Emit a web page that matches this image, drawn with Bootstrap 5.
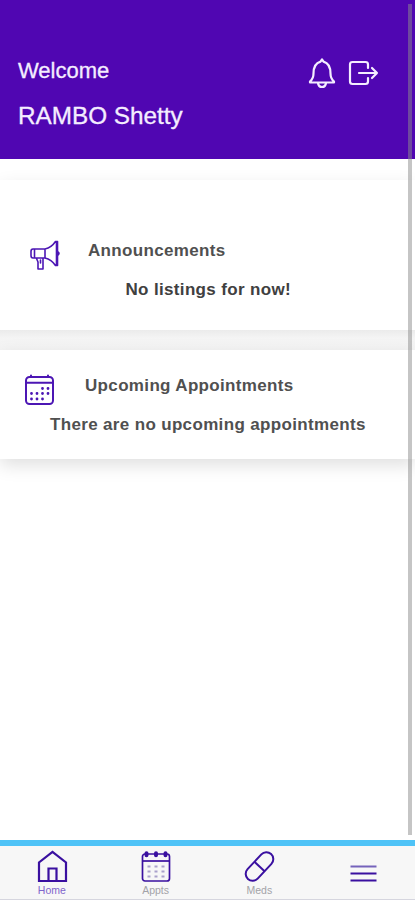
<!DOCTYPE html>
<html lang="en">
<head>
<meta charset="utf-8">
<meta name="viewport" content="width=device-width, initial-scale=1">
<title>Home</title>
<link href="https://cdn.jsdelivr.net/npm/bootstrap@5.3.0/dist/css/bootstrap.min.css" rel="stylesheet">
<style>
  :root { --brand: #5006b2; }
  body { font-family: "Liberation Sans", Arial, sans-serif; }
  svg { fill: none; stroke: currentColor; display: block; overflow: visible; flex-shrink: 0; }
  .app { height: 900px; }
  .hero { height: 159px; background: var(--brand); color: #f4edff; padding: 57px 36px 0 18px; }
  .hello { font-size: 22px; line-height: 26px; margin-top: 1px; -webkit-text-stroke: .3px; }
  .who { font-size: 24.3px; line-height: 30px; margin-top: 17px; -webkit-text-stroke: .3px; }
  .hero-icons { gap: 9px; }
  .panel { background: #fff; color: #505050; font-weight: 700; font-size: 17px; line-height: 22px; letter-spacing: .34px; }
  .news { margin-top: 21px; height: 150px; padding: 60px 0 0 28px; box-shadow: 0 6px 17px rgba(0,0,0,.1); }
  .visits { height: 109px; padding: 25px 0 0 23px; box-shadow: 0 6px 17px rgba(0,0,0,.13); }
  .gutter { background: linear-gradient(#ebebeb, #f4f4f4 40%, #f5f5f5); height: 20px; }
  .panel-head { height: 22px; }
  .message { margin-top: 17px; }
  .news .panel-head { gap: 27px; }
  .visits .panel-head { gap: 30px; }
  .news .message { margin-left: 97.5px; color: #404040; }
  .visits .message { margin-left: 27px; }
  .glyph { color: #4c16b4; }
  .tabs { height: 60px; background: #f7f7f7; border-top: 6px solid #4fc3f7; border-bottom: 1px solid #d6d6df; color: #3a10a0; }
  .tab-item { width: 103.75px; font-size: 10.5px; line-height: 12px; }
  .tab-item span { color: #a3a3a8; margin-top: 1px; }
  .tab-item.active span { color: #7f66cc; }
  .thumb { right: 3px; top: 4px; width: 4px; height: 831px; background: rgba(140,140,140,.5); }
</style>
</head>
<body>
<div class="app d-flex flex-column position-relative overflow-hidden bg-white">
  <header class="hero d-flex justify-content-between flex-shrink-0">
    <div>
      <div class="hello">Welcome</div>
      <div class="who">RAMBO Shetty</div>
    </div>
    <div class="d-flex hero-icons">
      <!-- bell -->
      <svg width="32" height="32" viewBox="0 0 32 32" stroke-width="2.200" stroke-linejoin="round" stroke-linecap="round"><path d="M4 24.500Q7.500 21.500 7.500 16.500C7.500 9.500 9.500 6 14.500 4.600L16 2.500l1.500 2.100C22.500 6 24.500 9.500 24.500 16.500q0 5 3.500 8v1H4zM12 26q.5 4 4 4t4-4"/></svg>
      <!-- log out -->
      <svg width="32" height="32" viewBox="0 0 32 32" stroke-width="2.200" stroke-linejoin="round" stroke-linecap="round"><path d="M21 11V7.500Q21 5 18.500 5h-13Q3 5 3 7.500v17Q3 27 5.500 27h13q2.500 0 2.500-2.500V21M12 16h18M25 11l5 5-5 5"/></svg>
    </div>
  </header>
  <main class="flex-grow-1 overflow-hidden">
    <section class="panel news">
      <div class="panel-head d-flex">
        <!-- megaphone -->
        <svg class="glyph" width="33" height="33" viewBox="0 0 33 33" stroke-width="1.600" stroke-linejoin="round" stroke-linecap="round"><path d="M5 9h12v9H5Q3 18 3 15.500v-4Q3 9 5 9zM6.500 9.500V18M17 9Q23.500 7.500 27.500 1.500h2v24h-2Q23.500 19.500 17 18M28.500 2v23M30 12q2 1.500 0 3M8.300 18l1.700 4v7h5V18M12.500 20v3"/></svg>
        <div>Announcements</div>
      </div>
      <div class="message">No listings for now!</div>
    </section>
    <div class="gutter"></div>
    <section class="panel visits">
      <div class="panel-head d-flex">
        <!-- calendar -->
        <svg class="glyph" width="32" height="32" viewBox="0 0 32 32" stroke-width="2"><rect x="3" y="2" width="27" height="27" rx="3.500"/><path d="M3 7.700h27M8 .5v1.500M25 .5v1.500" stroke-linecap="round"/><path d="M19.500 13.500h.01M25 13.500h.01M8.500 18.500h.01M14 18.500h.01M19.500 18.500h.01M25 18.500h.01M8.500 24h.01M14 24h.01M19.500 24h.01" stroke-width="2.800" stroke-linecap="round"/></svg>
        <div>Upcoming Appointments</div>
      </div>
      <div class="message">There are no upcoming appointments</div>
    </section>
  </main>
  <nav class="tabs d-flex flex-shrink-0">
    <div class="tab-item active d-flex flex-column align-items-center pt-1">
      <svg width="34" height="33" viewBox="0 0 34 33" stroke-width="2.200"><path d="M4 31V12.500L17.500 2 31 12.500V31zM13.500 31V18.500h8V31"/></svg>
      <span>Home</span>
    </div>
    <div class="tab-item d-flex flex-column align-items-center pt-1">
      <svg width="34" height="33" viewBox="0 0 34 33" stroke-width="1.700"><rect x="3.500" y="4" width="27" height="27" rx="2.500"/><path d="M3.500 11h27"/><path d="M7.500 3.300v2M17 3.300v2M26.500 3.300v2" stroke-width="4" stroke-linecap="round"/><path d="M8.500 16.500h3M15.500 16.500h3M22.500 16.500h3M8.500 21.500h3M15.500 21.500h3M22.500 21.500h3M8.500 26.500h3M15.500 26.500h3M22.500 26.500h3" stroke="#aaa1cc" stroke-width="1.800"/></svg>
      <span>Appts</span>
    </div>
    <div class="tab-item d-flex flex-column align-items-center pt-1">
      <svg width="34" height="33" viewBox="0 0 34 33" stroke-width="2"><g transform="rotate(-47 17.500 16.500)"><rect x="0.500" y="9.600" width="34" height="13.800" rx="6.900"/><path d="M17.500 9.600v13.800"/></g></svg>
      <span>Meds</span>
    </div>
    <div class="tab-item d-flex flex-column align-items-center pt-1">
      <svg width="34" height="46" viewBox="0 0 34 46" stroke-width="2"><path d="M4.500 16.500h26" stroke="#7563bb"/><path d="M4.500 23.500h26M4.500 30.500h26"/></svg>
    </div>
  </nav>
  <div class="thumb position-absolute"></div>
</div>
<script src="https://cdn.jsdelivr.net/npm/bootstrap@5.3.0/dist/js/bootstrap.bundle.min.js"></script>
</body>
</html>
